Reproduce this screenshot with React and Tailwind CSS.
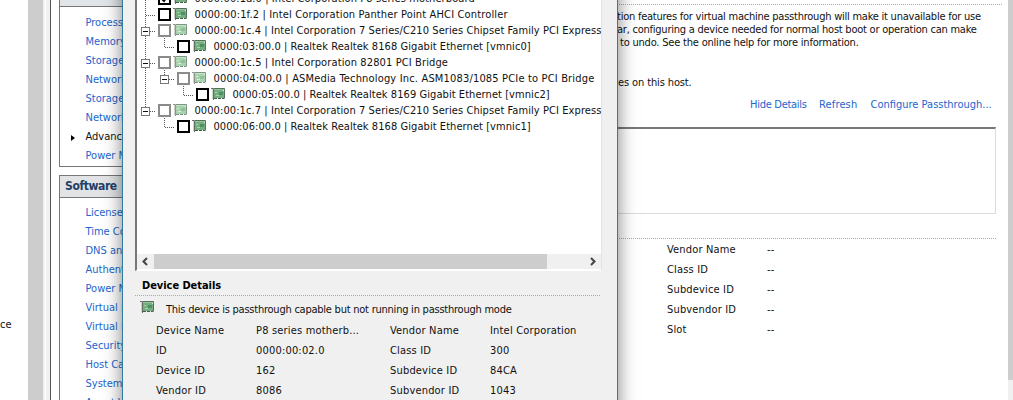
import React from "react";

const hardware = ["Processors", "Memory", "Storage", "Networking", "Storage Adapters", "Network Adapters", "Advanced Settings", "Power Management"];
const software = ["Licensed Features", "Time Configuration", "DNS and Routing", "Authentication", "Power Management", "Virtual Machines", "Virtual Machines", "Security Profile", "Host Cache", "System Resource", "Agent VM Settings"];

const devices = [
  { level: 0, kind: "checked", text: "0000:00:1a.0 | Intel Corporation P8 series motherboard", track: "tracking-[0.1px]" },
  { level: 0, kind: "box", text: "0000:00:1f.2 | Intel Corporation Panther Point AHCI Controller", track: "tracking-[0.15px]" },
  { level: 0, kind: "parent", text: "0000:00:1c.4 | Intel Corporation 7 Series/C210 Series Chipset Family PCI Express", track: "tracking-[0.08px]" },
  { level: 1, kind: "box", text: "0000:03:00.0 | Realtek Realtek 8168 Gigabit Ethernet [vmnic0]", track: "tracking-[0.065px]" },
  { level: 0, kind: "parent", text: "0000:00:1c.5 | Intel Corporation 82801 PCI Bridge", track: "tracking-[0.12px]" },
  { level: 1, kind: "parent", text: "0000:04:00.0 | ASMedia Technology Inc. ASM1083/1085 PCIe to PCI Bridge", track: "tracking-[0.17px]" },
  { level: 2, kind: "box", text: "0000:05:00.0 | Realtek Realtek 8169 Gigabit Ethernet [vmnic2]", track: "tracking-[0.065px]" },
  { level: 0, kind: "parent", last: true, text: "0000:00:1c.7 | Intel Corporation 7 Series/C210 Series Chipset Family PCI Express", track: "tracking-[0.08px]" },
  { level: 1, kind: "box", end: true, text: "0000:06:00.0 | Realtek Realtek 8168 Gigabit Ethernet [vmnic1]", track: "tracking-[0.065px]" },
];

const details = [
  ["Device Name", "P8 series motherb...", "Vendor Name", "Intel Corporation"],
  ["ID", "0000:00:02.0", "Class ID", "300"],
  ["Device ID", "162", "Subdevice ID", "84CA"],
  ["Vendor ID", "8086", "Subvendor ID", "1043"],
];

function CardIcon({ faded }) {
  const board = faded ? "#a9d3ae" : "#74ad80";
  const chip = faded ? "#8fbf9a" : "#4f8f64";
  return (
    <svg width="15" height="14" viewBox="0 0 15 14" className="shrink-0">
      <path d="M0 1.5H2.5V13" fill="none" stroke={faded ? "#8b958a" : "#63705f"} />
      <path d="M1.5 2V12" stroke="#cfd4cb" />
      <path d="M3 1.5H13.5V11" fill="none" stroke={faded ? "#7d9383" : "#55705c"} />
      <rect x="3" y="2" width="10" height="9" fill={board} />
      <path d="M3 2.5H13" stroke={faded ? "#c4e2c5" : "#94c29a"} />
      <path d="M8 5H12V8H8Z" fill={chip} />
      <path d="M4 5H6V6H4ZM5 8H8V9H5Z" fill={faded ? "#d9efd4" : "#a9d3a8"} />
      <path d="M3 11.5H13.5" stroke={faded ? "#80907f" : "#47594b"} strokeDasharray="3 1" />
      <path d="M12 3H13V4H12Z" fill="#e2efcf" />
    </svg>
  );
}

function Connector({ level, kind, last, end }) {
  const width = 21 + level * 19;
  const x = 8.5 + level * 19;
  const parent = kind === "parent";
  return (
    <svg width={width} height="16" className="shrink-0">
      <g stroke="#555" strokeDasharray="1 1" shapeRendering="crispEdges">
        {!end && <path d={`M8.5 0V${last ? 8 : 16}`} />}
        {level > 0 && <path d={`M${x} 0V10`} />}
        <path d={`M${x + 0.5} 9.5H${width - 2}`} />
      </g>
      {parent && (
        <g>
          <rect x={x - 4} y="5.5" width="8" height="8" fill="#fff" stroke="#777" />
          <path d={`M${x - 2.5} 9.5H${x + 2.5}`} stroke="#111" />
        </g>
      )}
    </svg>
  );
}

function DeviceRow({ device }) {
  const parent = device.kind === "parent";
  return (
    <div className="flex h-4 shrink-0 items-start whitespace-nowrap">
      <Connector {...device} />
      <div className={parent ? "mt-[2px] size-[13px] shrink-0 border-2 border-[#8b8b8b]" : "mt-[2px] size-[13px] shrink-0 border-2 border-black"}>
        {device.kind === "checked" && (
          <svg width="9" height="9" viewBox="0 0 9 9"><path d="M1 4L4 7L8 1" fill="none" stroke="#000" strokeWidth="2" /></svg>
        )}
      </div>
      <div className="mt-px ml-[2px] w-[21.5px] shrink-0"><CardIcon faded={parent} /></div>
      <span className={`mt-px leading-4 ${device.track}`}>{device.text}</span>
    </div>
  );
}

function SideList({ items, active }) {
  return (
    <ul className="pl-[25.5px] text-[#2265cc]">
      {items.map((item, i) => (
        <li key={i} className="flex h-[19px] items-center whitespace-nowrap">
          {item === active && (
            <svg width="4" height="6" className="-ml-[15px] mr-[11px] shrink-0"><path d="M0 0L4 3L0 6Z" fill="#000" /></svg>
          )}
          <span className={item === active ? "text-[#111]" : ""}>{item}</span>
        </li>
      ))}
    </ul>
  );
}

const dotted = "h-px shrink-0 bg-[repeating-linear-gradient(90deg,#aaa_0,#aaa_1px,transparent_1px,transparent_2px)]";

function Dialog() {
  return (
    <section className="absolute -top-10 left-[122px] h-[500px] w-[496px] border-x border-[#307ba6] bg-[#f0f0f0] pt-10 shadow-[0_0_17px_rgba(0,0,0,0.5)]">
      <div className="ml-[12px] flex h-[271px] w-[467px] flex-col overflow-hidden border-r border-b border-l-2 border-r-[#e3e3e3] border-b-white border-l-[#777] bg-white">
        <div className="-mt-[10px] flex h-[264px] flex-col overflow-hidden">
          {devices.map((d) => <DeviceRow key={d.text} device={d} />)}
        </div>
        <div className="flex h-[15px] items-center bg-[#f0f0f0]">
          <svg width="17" height="15"><path d="M10 4L6.5 7.5L10 11" fill="none" stroke="#444" strokeWidth="2" /></svg>
          <div className="h-[15px] w-[393px] bg-[#cdcdcd]" />
          <svg width="17" height="15" className="ml-auto"><path d="M7 4L10.5 7.5L7 11" fill="none" stroke="#444" strokeWidth="2" /></svg>
        </div>
      </div>
      <h2 className="mt-[7px] ml-[19px] h-4 text-[11px] leading-4 font-bold tracking-[-0.05px] text-black">Device Details</h2>
      <div className={`mt-px mr-[17px] ml-[12px] ${dotted}`} />
      <div className="mt-[4px] ml-[17px] flex h-5 items-start whitespace-nowrap">
        <CardIcon />
        <span className="mt-[2px] ml-[11px] leading-4 tracking-[-0.235px]">This device is passthrough capable but not running in passthrough mode</span>
      </div>
      <div className="mt-px ml-[33px] tracking-[0.18px]">
        {details.map((r) => (
          <div key={r[0]} className="grid h-5 grid-cols-[100px_134px_100px_110px] items-center whitespace-nowrap">
            {r.map((c) => <span key={c}>{c}</span>)}
          </div>
        ))}
      </div>
    </section>
  );
}

export default function App() {
  return (
    <main className="relative flex h-[400px] w-[1013px] overflow-hidden bg-white font-['DejaVu_Sans_Condensed','DejaVu_Sans',sans-serif] text-[11px] text-[#111] [font-stretch:condensed]">
      <div className="w-7 shrink-0 pt-[317px] leading-4">ce</div>
      <div className="w-[15px] shrink-0 bg-[#cdcdcd]" />
      <div className="flex w-[8px] shrink-0 border-r border-[#555] bg-[#f0f0f0] pl-[2px]"><div className="w-px bg-white" /></div>
      <nav className="w-[72px] shrink-0 pl-2">
        <div className="h-[167px] overflow-hidden border-b border-l border-[#777]">
          <div className="mb-[7px] h-[7px] border-b border-[#777] bg-[#e2e5e8]" />
          <SideList items={hardware} active="Advanced Settings" />
        </div>
        <div className="mt-2 h-[230px] overflow-hidden border-t border-l border-[#777]">
          <h2 className="mb-[6px] h-[22px] border-b border-[#777] bg-[#e2e3e5] pl-[5px] text-[12px] leading-[21px] font-bold tracking-[-0.4px] text-[#1f3f66]">Software</h2>
          <SideList items={software} />
        </div>
      </nav>
      <div className="w-[494px] shrink-0" />
      <article className="flex w-[379px] shrink-0 flex-col whitespace-nowrap">
        <div className={`mt-1 -mr-[6px] ${dotted}`} />
        <p className="mt-[5px] leading-[13px]">
          <span className="tracking-[-0.235px]">tion features for virtual machine passthrough will make it unavailable for use</span><br />
          <span className="tracking-[-0.235px]">ar, configuring a device needed for normal host boot or operation can make</span><br />
          <span className="ml-[3px] tracking-[-0.2px]">to undo. See the online help for more information.</span>
        </p>
        <p className="mt-[26px] ml-px h-4 leading-4 tracking-[-0.12px]">es on this host.</p>
        <div className="mt-[6px] flex h-4 leading-4 text-[#2265cc]">
          <span className="ml-[133px] w-[69px] tracking-[-0.28px]">Hide Details</span>
          <span className="w-[51.5px] tracking-[0.15px]">Refresh</span>
          <span>Configure Passthrough...</span>
        </div>
        <div className="mt-[14px] h-[87px] border-t-2 border-r border-b border-t-[#777] border-r-[#dcdcdc] border-b-[#dcdcdc]" />
        <div className={`mt-6 ${dotted}`} />
        <div className="mt-px ml-[50px] tracking-[0.16px]">
          {["Vendor Name", "Class ID", "Subdevice ID", "Subvendor ID", "Slot"].map((t) => (
            <div key={t} className="grid h-5 grid-cols-[100px_50px] items-center"><span>{t}</span><span>--</span></div>
          ))}
        </div>
      </article>
      <div className="ml-auto w-[5px] shrink-0 bg-[#f0f0f0]"><div className="h-[380px] bg-[#cdcdcd]" /></div>
      <Dialog />
    </main>
  );
}
